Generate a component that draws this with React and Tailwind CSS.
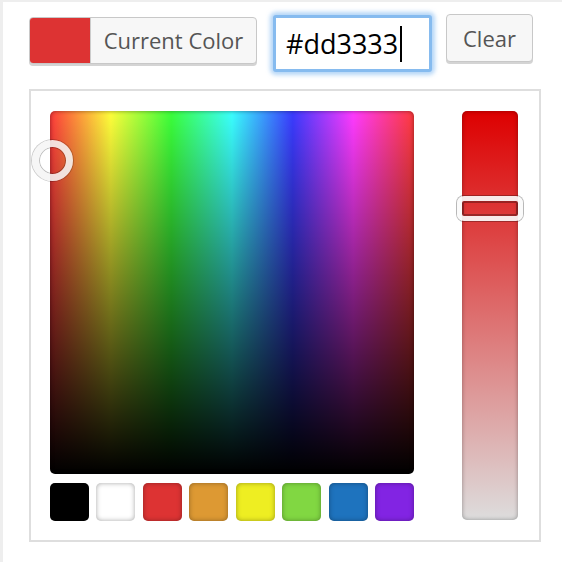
import React from "react";

const palette = ["#000000", "#ffffff", "#dd3333", "#dd9933", "#eeee22", "#81d742", "#1e73be", "#8224e3"];

export default function App() {
  return (
    <div
      className="w-[562px] h-[562px] overflow-hidden bg-white border-l-[3px] border-t-[2px] border-[#eeeeee]"
      style={{ fontFamily: '"Open Sans", "Liberation Sans", sans-serif' }}
    >
      {/* top controls */}
      <div className="flex items-start pl-[26px] pt-[12px]">
        <button className="mt-[3px] flex h-[47px] w-[228px] items-stretch overflow-hidden rounded-[4px] border border-[#c8c8c8] bg-[#f7f7f7] p-0 shadow-[0_2px_0_#d4d4d4]">
          <span className="w-[60px] bg-[#dd3333]" />
          <span className="flex flex-1 items-center justify-center border-l border-[#cccccc] text-[22px] text-[#555555]">
            Current Color
          </span>
        </button>

        <div className="ml-[16px] mt-[1px] flex h-[57px] w-[159px] items-center rounded-[3px] border-[3px] border-[#86bbef] bg-white pl-[10px] shadow-[0_0_4px_3px_rgba(120,180,240,0.55)]">
          <span className="text-[27px] leading-none text-black">#dd3333</span>
          <span className="ml-[2px] h-[36px] w-[2px] bg-black" />
        </div>

        <button className="ml-[14px] h-[48px] w-[87px] rounded-[4px] border border-[#c8c8c8] bg-[#f7f7f7] text-[22px] text-[#555555] shadow-[0_2px_0_#d4d4d4]">
          Clear
        </button>
      </div>

      {/* picker panel */}
      <div className="ml-[26px] mt-[17px] flex h-[453px] w-[512px] border-2 border-[#dedede] pl-[19px] pt-[20px]">
        <div className="flex w-[364px] flex-col">
          <div className="relative h-[363px] w-[364px] rounded-[5px] bg-[linear-gradient(to_bottom,transparent,#000),linear-gradient(rgba(255,255,255,0.23),rgba(255,255,255,0.23)),linear-gradient(to_right,#f00,#ff0,#0f0,#0ff,#00f,#f0f,#f00)] shadow-[inset_0_0_4px_rgba(0,0,0,0.45)]">
            <div className="absolute left-[-18px] top-[29px] h-[41px] w-[41px] rounded-full border-[7px] border-[rgba(245,245,245,0.88)] shadow-[0_0_0_1px_rgba(0,0,0,0.2),inset_0_0_0_1px_rgba(0,0,0,0.25)]" />
          </div>
          <div className="mt-[9px] flex justify-between">
            {palette.map((c) => (
              <span
                key={c}
                className="h-[38px] w-[39px] rounded-[5px] shadow-[inset_0_0_5px_rgba(0,0,0,0.35)]"
                style={{ backgroundColor: c }}
              />
            ))}
          </div>
        </div>

        <div className="relative ml-[48px] h-[409px] w-[56px] rounded-[5px] bg-[linear-gradient(to_bottom,#dd0000,#dddddd)] shadow-[inset_0_0_4px_rgba(0,0,0,0.35)]">
          <div className="absolute left-[-5px] top-[85px] h-[25px] w-[66px] rounded-[7px] border-[5px] border-[rgba(250,250,250,0.92)] shadow-[0_0_0_1px_rgba(0,0,0,0.28),inset_0_0_0_2px_rgba(0,0,0,0.3)]" />
        </div>
      </div>
    </div>
  );
}
